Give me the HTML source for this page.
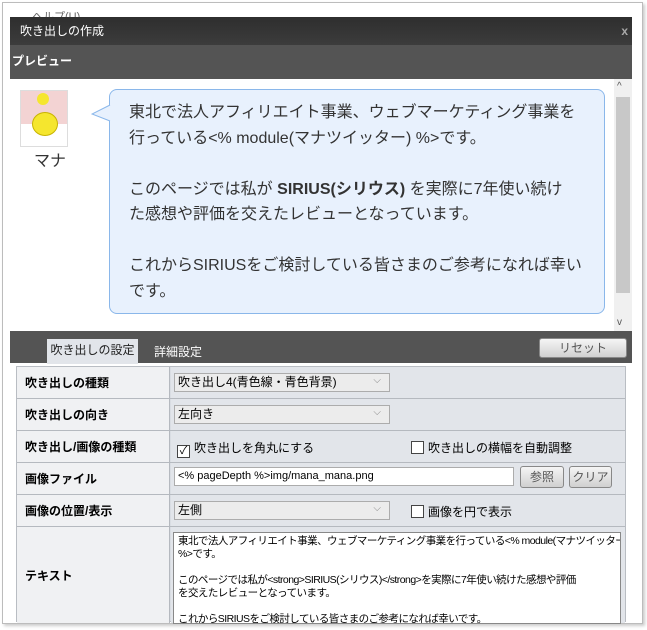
<!DOCTYPE html>
<html><head><meta charset="utf-8"><style>
*{margin:0;padding:0;box-sizing:border-box}
body{width:647px;height:630px;background:#fff;position:relative;overflow:hidden;font-family:"Liberation Sans","Noto Sans CJK JP",sans-serif;}
.abs{position:absolute}
.frame{left:2px;top:2px;width:641px;height:622px;border:1px solid #bcbcbc;box-shadow:2px 2px 3px #ccc;background:#fff}
.title{left:10px;top:17px;width:622px;height:28px;background:linear-gradient(#2e2e2e,#3c3c3c);color:#fff;font-size:12px;line-height:28px;padding-left:10px}
.prev{left:10px;top:45px;width:622px;height:34px;background:#545454;color:#fff;font-size:12px;font-weight:bold;line-height:32px;padding-left:2px}
.bubble{left:109px;top:89px;width:496px;height:225px;background:#e8f1fd;border:1px solid #8ab7ea;border-radius:8px;padding:10px 10px 10px 19px;font-size:16px;line-height:25.5px;color:#333;letter-spacing:0;white-space:nowrap}
.bar{left:10px;top:331px;width:622px;height:32px;background:#545454}
.tbl{left:16px;top:366px;width:610px;height:256px;background:#d9dde3;border:1px solid #b9bdc3}
.row{position:absolute;left:0;width:608px;border-bottom:1px solid #b5b9bf}
.lab{position:absolute;left:0;top:0;bottom:0;width:153px;background:#f0f1f3;border-right:1px solid #b5b9bf;font-size:12px;font-weight:bold;padding-left:8px;display:flex;align-items:center}
.val{position:absolute;left:154px;top:0;bottom:0;right:0;background:#e2e5ea;font-size:12px}
.sel{position:absolute;left:3px;top:6px;width:216px;height:19px;background:#ececec;border:1px solid #acacac;font-size:12px;line-height:17px;padding-left:3px}
.sel:after{content:"⌵";position:absolute;right:8px;top:-2px;color:#888;font-size:10px}
.cb{display:inline-block;width:13px;height:13px;border:1px solid #444;background:#fff;vertical-align:-2px;margin-right:4px;font-size:11px;line-height:11px;text-align:center}
.btn{position:absolute;height:22px;border:1px solid #888;border-radius:3px;background:linear-gradient(#f5f5f5,#d0d0d0);font-size:12px;color:#555;text-align:center;line-height:20px}
</style></head><body>
<div class="abs frame"></div>
<div class="abs" style="left:32px;top:8px;font-size:11px;color:#666">ヘルプ(U)</div>
<div class="abs title">吹き出しの作成<span style="position:absolute;right:4px;color:#aaa;font-weight:bold">x</span></div>
<div class="abs prev">プレビュー</div>
<div class="abs" style="left:10px;top:79px;width:622px;height:252px;background:#fff"></div>
<div class="abs" style="left:614px;top:79px;width:18px;height:252px;background:#f0f0f0"></div>
<div class="abs" style="left:616px;top:97px;width:14px;height:196px;background:#c8c8c8"></div>
<div class="abs" style="left:617px;top:81px;font-size:10px;color:#555">^</div>
<div class="abs" style="left:617px;top:317px;font-size:10px;color:#555">v</div>
<div class="abs" style="left:20px;top:90px;width:48px;height:57px;border:1px solid #ddd;background:linear-gradient(#f3d3d3 0,#f3d3d3 60%,#fff 60%)"></div>
<div class="abs" style="left:32px;top:112px;width:26px;height:24px;border-radius:50%;background:#f5e62e;border:1px solid #c8b400"></div>
<div class="abs" style="left:37px;top:93px;width:12px;height:12px;border-radius:50%;background:#f5e62e"></div>
<div class="abs" style="left:34px;top:147px;font-size:16px;color:#333">マナ</div>
<div class="abs bubble">東北で法人アフィリエイト事業、ウェブマーケティング事業を<br>行っている&lt;% module(マナツイッター) %&gt;です。<br><br>このページでは私が <b>SIRIUS(シリウス)</b> を実際に7年使い続け<br>た感想や評価を交えたレビューとなっています。<br><br>これからSIRIUSをご検討している皆さまのご参考になれば幸い<br>です。</div>
<svg class="abs" style="left:91px;top:104px" width="20" height="20"><path d="M19 1 L1 10 L19 17" fill="#e8f1fd" stroke="#8ab7ea"/></svg>
<div class="abs bar"></div>
<div class="abs" style="left:47px;top:339px;width:91px;height:25px;background:#e2e5ea;font-size:12px;text-align:center;line-height:22px;color:#222">吹き出しの設定</div>
<div class="abs" style="left:154px;top:343px;font-size:12px;color:#fff">詳細設定</div>
<div class="btn" style="left:539px;top:338px;width:88px;height:20px;line-height:18px">リセット</div>
<div class="abs tbl">
<div class="row" style="top:0;height:32px"><div class="lab">吹き出しの種類</div><div class="val"><div class="sel">吹き出し4(青色線・青色背景)</div></div></div>
<div class="row" style="top:32px;height:32px"><div class="lab">吹き出しの向き</div><div class="val"><div class="sel">左向き</div></div></div>
<div class="row" style="top:64px;height:32px"><div class="lab">吹き出し/画像の種類</div><div class="val"><div class="abs" style="left:6px;top:8px"><span class="cb">✓</span>吹き出しを角丸にする</div><div class="abs" style="left:240px;top:8px"><span class="cb"></span>吹き出しの横幅を自動調整</div></div></div>
<div class="row" style="top:96px;height:32px"><div class="lab">画像ファイル</div><div class="val"><div class="abs" style="left:3px;top:4px;width:340px;height:19px;background:#fff;border:1px solid #acacac;padding-left:3px;line-height:17px;font-size:11px">&lt;% pageDepth %&gt;img/mana_mana.png</div><div class="btn" style="left:349px;top:3px;width:44px">参照</div><div class="btn" style="left:398px;top:3px;width:43px">クリア</div></div></div>
<div class="row" style="top:128px;height:32px"><div class="lab">画像の位置/表示</div><div class="val"><div class="sel">左側</div><div class="abs" style="left:240px;top:8px"><span class="cb"></span>画像を円で表示</div></div></div>
<div class="row" style="top:160px;height:96px;border:0"><div class="lab">テキスト</div><div class="val"><div class="abs" style="left:2px;top:5px;width:448px;height:92px;background:#fff;border:1px solid #888;padding:2px 4px;font-size:10.5px;line-height:13px;overflow:hidden;letter-spacing:-0.55px;white-space:nowrap">東北で法人アフィリエイト事業、ウェブマーケティング事業を行っている&lt;% module(マナツイッター)<br>%&gt;です。<br><br>このページでは私が&lt;strong&gt;SIRIUS(シリウス)&lt;/strong&gt;を実際に7年使い続けた感想や評価<br>を交えたレビューとなっています。<br><br>これからSIRIUSをご検討している皆さまのご参考になれば幸いです。</div></div></div>
</div>
</body></html>
